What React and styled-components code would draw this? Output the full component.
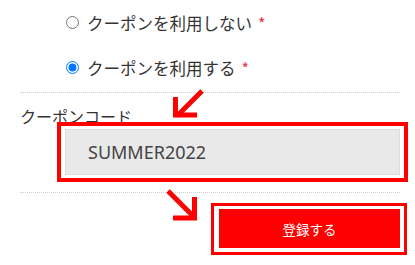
import React from "react";
import styled, { createGlobalStyle } from "styled-components";

const Global = createGlobalStyle`
  html, body { margin: 0; padding: 0; background: #fff; }
  body { font-family: "Noto Sans CJK JP", "Noto Sans", sans-serif; color: #333; }
`;

const Page = styled.div`
  position: relative;
  width: 415px;
  height: 265px;
  overflow: hidden;
  background: #fff;
`;

const Form = styled.form`
  padding: 0 15px 0 20px;
`;

const RadioList = styled.div`
  padding-left: 46px;
`;

const Option = styled.label`
  display: flex;
  align-items: center;
  gap: 8px;
  height: 45px;
  font-size: 16.5px;
  color: #333;
`;

const Radio = styled.input`
  margin: 0;
  width: 13px;
  height: 13px;
  flex: none;
`;

const Required = styled.span`
  color: #e8343f;
  font-size: 16px;
  margin-left: 6px;
`;

const Divider = styled.div`
  border-top: 1px dotted #cfcfcf;
  margin-top: ${(p) => p.$top}px;
`;

const FieldLabel = styled.div`
  margin-top: 13px;
  font-size: 16px;
  line-height: 20px;
  color: #333;
`;

const InputWrap = styled.div`
  position: relative;
  margin: 3px 0 0 45px;
  height: 46px;
`;

const CodeInput = styled.input`
  box-sizing: border-box;
  width: 100%;
  height: 46px;
  margin: 0;
  background: #e9e9e9;
  border: 1px solid #dddddd;
  padding: 0 0 0 22px;
  font-family: "Noto Sans", "Open Sans", sans-serif;
  font-size: 18px;
  color: #444;
  outline: none;
`;

const Highlight = styled.span`
  position: absolute;
  top: ${(p) => p.$t}px;
  left: ${(p) => p.$l}px;
  right: ${(p) => p.$r}px;
  bottom: ${(p) => p.$b}px;
  border: ${(p) => p.$w}px solid #ff0000;
  pointer-events: none;
`;

const ButtonRow = styled.div`
  display: flex;
  justify-content: flex-end;
  margin-top: 16px;
`;

const ButtonWrap = styled.div`
  position: relative;
`;

const SubmitButton = styled.button`
  display: block;
  width: 181px;
  height: 39px;
  margin: 0;
  border: none;
  background: #ff0000;
  color: #fff;
  font-family: "Noto Sans CJK JP", sans-serif;
  font-size: 13.5px;
  cursor: pointer;
`;

const ArrowSvg = styled.svg`
  position: absolute;
  left: ${(p) => p.$x}px;
  top: ${(p) => p.$y}px;
  overflow: visible;
  pointer-events: none;
`;

function Arrow({ x, y, w, h, shaft, head }) {
  return (
    <ArrowSvg $x={x} $y={y} width={w} height={h} viewBox={`${x} ${y} ${w} ${h}`}>
      <path d={shaft} stroke="#ff0000" strokeWidth="5" fill="none" />
      <path d={head} stroke="#ff0000" strokeWidth="5" fill="none" strokeLinejoin="miter" />
    </ArrowSvg>
  );
}

export default function App() {
  return (
    <Page>
      <Global />
      <Form onSubmit={(e) => e.preventDefault()}>
        <RadioList>
          <Option>
            <Radio type="radio" name="coupon" />
            <span>
              クーポンを利用しない<Required>*</Required>
            </span>
          </Option>
          <Option>
            <Radio type="radio" name="coupon" defaultChecked />
            <span>
              クーポンを利用する<Required>*</Required>
            </span>
          </Option>
        </RadioList>
        <Divider $top={2} />
        <FieldLabel>クーポンコード</FieldLabel>
        <InputWrap>
          <CodeInput type="text" defaultValue="SUMMER2022" />
          <Highlight $t={-7} $l={-8} $r={-8} $b={-7} $w={4} />
        </InputWrap>
        <Divider $top={17} />
        <ButtonRow>
          <ButtonWrap>
            <SubmitButton type="submit">登録する</SubmitButton>
            <Highlight $t={-6} $l={-8} $r={-7} $b={-7} $w={3} />
          </ButtonWrap>
        </ButtonRow>
      </Form>
      <Arrow
        x={165}
        y={84}
        w={45}
        h={40}
        shaft="M202 91 L177 116"
        head="M175.5 97 V115 H197"
      />
      <Arrow
        x={162}
        y={185}
        w={42}
        h={40}
        shaft="M168 191 L193 216"
        head="M173 218 H194.5 V197"
      />
    </Page>
  );
}
